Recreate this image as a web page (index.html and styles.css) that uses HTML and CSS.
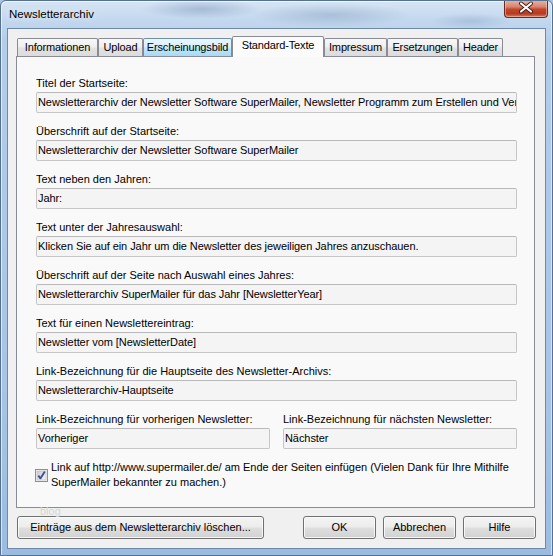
FILE: index.html
```html
<!DOCTYPE html>
<html lang="de">
<head>
<meta charset="utf-8">
<title>Newsletterarchiv</title>
<link rel="stylesheet" href="styles.css">
</head>
<body>
<div class="window">
  <div class="titlebar">
    <span class="title">Newsletterarchiv</span>
    <div class="close">
      <svg width="44" height="18" viewBox="0 0 44 18">
        <path d="M17 4.5 L27 12.5 M27 4.5 L17 12.5" stroke="#4a1a12" stroke-width="4" stroke-linecap="round" fill="none"/>
        <path d="M17 4.5 L27 12.5 M27 4.5 L17 12.5" stroke="#ffffff" stroke-width="2.2" stroke-linecap="round" fill="none"/>
      </svg>
    </div>
  </div>
  <div class="client">
    <div class="tabs">
      <div class="tab">Informationen</div>
      <div class="tab">Upload</div>
      <div class="tab hover">Erscheinungsbild</div>
      <div class="tab active">Standard-Texte</div>
      <div class="tab">Impressum</div>
      <div class="tab">Ersetzungen</div>
      <div class="tab">Header</div>
    </div>
    <div class="panel">
      <div class="field">
        <div class="label">Titel der Startseite:</div>
        <div class="input">Newsletterarchiv der Newsletter Software SuperMailer, Newsletter Programm zum Erstellen und Ver</div>
      </div>
      <div class="field">
        <div class="label">Überschrift auf der Startseite:</div>
        <div class="input">Newsletterarchiv der Newsletter Software SuperMailer</div>
      </div>
      <div class="field">
        <div class="label">Text neben den Jahren:</div>
        <div class="input">Jahr:</div>
      </div>
      <div class="field">
        <div class="label">Text unter der Jahresauswahl:</div>
        <div class="input">Klicken Sie auf ein Jahr um die Newsletter des jeweiligen Jahres anzuschauen.</div>
      </div>
      <div class="field">
        <div class="label">Überschrift auf der Seite nach Auswahl eines Jahres:</div>
        <div class="input">Newsletterarchiv SuperMailer für das Jahr [NewsletterYear]</div>
      </div>
      <div class="field">
        <div class="label">Text für einen Newslettereintrag:</div>
        <div class="input">Newsletter vom [NewsletterDate]</div>
      </div>
      <div class="field">
        <div class="label">Link-Bezeichnung für die Hauptseite des Newsletter-Archivs:</div>
        <div class="input">Newsletterarchiv-Hauptseite</div>
      </div>
      <div class="field-row">
        <div class="field">
          <div class="label">Link-Bezeichnung für vorherigen Newsletter:</div>
          <div class="input">Vorheriger</div>
        </div>
        <div class="field">
          <div class="label">Link-Bezeichnung für nächsten Newsletter:</div>
          <div class="input">Nächster</div>
        </div>
      </div>
      <div class="check">
        <svg class="checkbox" width="13" height="13" viewBox="0 0 13 13">
          <defs>
            <linearGradient id="cbg" x1="0" y1="0" x2="1" y2="1">
              <stop offset="0" stop-color="#c9ccd3"/>
              <stop offset="1" stop-color="#f4f5f7"/>
            </linearGradient>
          </defs>
          <rect x="0.5" y="0.5" width="12" height="12" fill="#f4f4f4" stroke="#8e8f8f"/>
          <rect x="2" y="2" width="9" height="9" fill="url(#cbg)" stroke="#b9bcc2" stroke-width="0.6"/>
          <path d="M3.3 6.6 L5.4 9.4 L9.8 2.6" stroke="#3b4f8a" stroke-width="1.8" fill="none" stroke-linejoin="round"/>
        </svg>
        <div class="check-text">Link auf http://www.supermailer.de/ am Ende der Seiten einfügen (Vielen Dank für Ihre Mithilfe<br>SuperMailer bekannter zu machen.)</div>
      </div>
    </div>
    <div class="buttons">
      <div class="btn wide">Einträge aus dem Newsletterarchiv löschen...</div>
      <div class="spacer"></div>
      <div class="btn">OK</div>
      <div class="btn">Abbrechen</div>
      <div class="btn">Hilfe</div>
    </div>
    <span class="ghost">blog</span>
  </div>
</div>
</body>
</html>
```

FILE: styles.css
```css
html, body {
  margin: 0;
  padding: 0;
  background: #a9c5e4;
}

body {
  font-family: "Liberation Sans", Arial, sans-serif;
  font-size: 11px;
  color: #000;
}

.window {
  width: 553px;
  height: 556px;
  box-sizing: border-box;
  border: 1px solid #56708f;
  border-radius: 6px 6px 0 0;
  padding: 0 6px 6px 6px;
  display: flex;
  flex-direction: column;
  overflow: hidden;
  background:
    radial-gradient(ellipse 60px 10px at 200px 8px, rgba(90, 120, 160, 0.35), transparent),
    radial-gradient(ellipse 80px 12px at 330px 14px, rgba(80, 110, 150, 0.25), transparent),
    radial-gradient(ellipse 40px 8px at 470px 20px, rgba(100, 130, 170, 0.25), transparent),
    linear-gradient(180deg, #d6e5f4 0px, #c2d7ee 20px, #b3cdea 40px, #a7c4e5 70%, #9bbce0 100%);
  box-shadow: inset 1px 1px 0 rgba(255, 255, 255, 0.6), inset -1px 0 0 rgba(255, 255, 255, 0.5);
}

.titlebar {
  height: 27px;
  display: flex;
  justify-content: space-between;
  align-items: flex-start;
  flex: none;
}

.title {
  margin-top: 7px;
  padding-left: 2px;
  font-size: 11.5px;
  color: #000;
  text-shadow: 0 0 6px rgba(255, 255, 255, 0.9);
}

.close {
  width: 44px;
  height: 18px;
  margin-right: -2px;
  margin-top: -1px;
  box-sizing: border-box;
  border: 1px solid #6a2a20;
  border-top: none;
  border-radius: 0 0 4px 4px;
  background: linear-gradient(180deg, #eab5a6 0%, #d88470 40%, #c4452c 55%, #b73a22 80%, #d07a5d 100%);
  box-shadow: inset 0 0 0 1px rgba(255, 220, 210, 0.45);
}

.close svg {
  display: block;
  margin-left: -1px;
  margin-top: -1px;
}

.client {
  position: relative;
  flex: 1;
  border: 1px solid #6f89a8;
  background: #f0f0f0;
  padding-top: 7px;
  box-sizing: border-box;
}

.tabs {
  display: flex;
  align-items: flex-end;
  height: 20px;
  margin-left: 9px;
}

.tab {
  position: relative;
  height: 18px;
  box-sizing: border-box;
  border: 1px solid #898c95;
  border-bottom: none;
  border-radius: 2px 2px 0 0;
  background: linear-gradient(180deg, #f7f7f7 0%, #efefef 45%, #e2e2e2 55%, #dcdcdc 100%);
  text-align: center;
  line-height: 17px;
  white-space: nowrap;
  letter-spacing: -0.15px;
}

.tab:nth-child(1) { width: 81px; }
.tab:nth-child(2) { width: 45px; }
.tab:nth-child(3) { width: 89px; }
.tab:nth-child(4) { width: 92px; }
.tab:nth-child(5) { width: 63px; }
.tab:nth-child(6) { width: 71px; }
.tab:nth-child(7) { width: 45px; }

.tab.hover {
  border-color: #6e8fac;
  background: linear-gradient(180deg, #eaf6fd 0%, #d9f0fc 45%, #bee6fd 55%, #a7d9f5 100%);
}

.tab.active {
  height: 21px;
  margin-bottom: -1px;
  z-index: 1;
  background: #fbfbfb;
  line-height: 17px;
}

.panel {
  margin-left: 8px;
  width: 519px;
  height: 452px;
  box-sizing: border-box;
  border: 1px solid #898c95;
  background: #f9f9f9;
  padding: 19px 17px 0 19px;
}

.field {
  margin-bottom: 11px;
}

.label {
  line-height: 14px;
  height: 14px;
  margin-bottom: 2px;
  white-space: nowrap;
}

.input {
  height: 21px;
  box-sizing: border-box;
  border: 1px solid #c6c6c6;
  border-top-color: #b9b9b9;
  border-radius: 2px;
  background: #f4f4f4;
  padding: 0 1px;
  line-height: 19px;
  white-space: nowrap;
  overflow: hidden;
  letter-spacing: -0.07px;
}

.field-row {
  display: grid;
  grid-template-columns: 234px 234px;
  column-gap: 13px;
}

.check {
  display: flex;
  align-items: center;
}

.checkbox {
  flex: none;
  margin-left: -1px;
  margin-right: 3px;
}

.check-text {
  line-height: 15px;
  white-space: nowrap;
}

.buttons {
  display: flex;
  margin-top: 8px;
  padding: 0 9px;
  gap: 7px;
}

.spacer {
  flex: 1;
}

.btn {
  width: 73px;
  height: 23px;
  box-sizing: border-box;
  border: 1px solid #707070;
  border-radius: 3px;
  background: linear-gradient(180deg, #f4f4f4 0%, #ececec 48%, #dedede 52%, #d2d2d2 100%);
  box-shadow: inset 0 0 0 1px rgba(255, 255, 255, 0.75);
  text-align: center;
  line-height: 21px;
  white-space: nowrap;
}

.btn.wide {
  width: 247px;
}

.ghost {
  position: absolute;
  left: 32px;
  top: 476px;
  font-size: 11px;
  color: #d6d6d6;
}
```
